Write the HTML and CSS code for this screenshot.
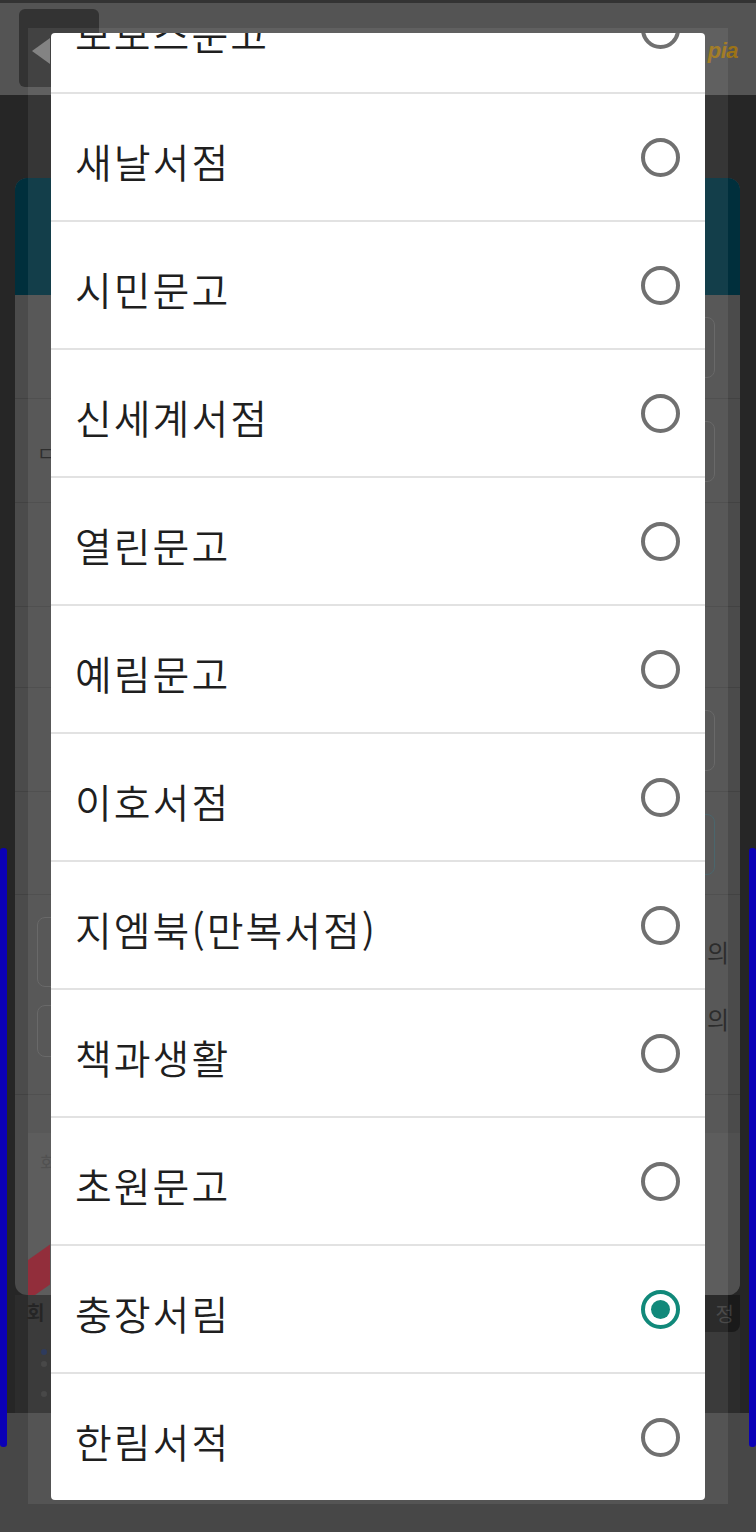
FILE: index.html
```html
<!DOCTYPE html>
<html lang="ko">
<head>
<meta charset="utf-8">
<title>서점 선택</title>
<link rel="stylesheet" href="styles.css">
</head>
<body>
<div class="page">
  <header class="topbar">
    <div class="back"><span class="arrow"></span></div>
    <div class="logo">pia</div>
  </header>
  <div class="gap"></div>
  <section class="card">
    <div class="card-head"></div>
    <div class="card-body">
      <div class="frow r1"><span class="field"></span></div>
      <div class="frow r2"><span class="label">ㄷ</span><span class="field"></span></div>
      <div class="frow r3"></div>
      <div class="frow r4"></div>
      <div class="frow r5"><span class="field"></span></div>
      <div class="frow r6"><span class="field sel"></span></div>
      <div class="frow r7">
        <div class="chk"><span class="cbox"></span><span class="agree">의</span></div>
        <div class="chk second"><span class="cbox small"></span><span class="agree">의</span></div>
      </div>
      <div class="frow r8">
        <div class="banner"><span class="btxt">회</span><span class="mark"></span></div>
      </div>
    </div>
  </section>
  <div class="footer">
    <div class="foot-left">
      <span class="ftitle">회</span>
      <span class="dot blue"></span>
      <span class="dot"></span>
      <span class="dot low"></span>
    </div>
    <div class="foot-btn">정</div>
  </div>
  <div class="bottom-band"></div>
</div>

<div class="edge edge-left"></div>
<div class="edge edge-right"></div>
<div class="scrim"></div>

<div class="dialog">
  <ul class="list">
    <li class="item"><span class="name">보보스문고</span><span class="radio"></span></li>
    <li class="item"><span class="name">새날서점</span><span class="radio"></span></li>
    <li class="item"><span class="name">시민문고</span><span class="radio"></span></li>
    <li class="item"><span class="name">신세계서점</span><span class="radio"></span></li>
    <li class="item"><span class="name">열린문고</span><span class="radio"></span></li>
    <li class="item"><span class="name">예림문고</span><span class="radio"></span></li>
    <li class="item"><span class="name">이호서점</span><span class="radio"></span></li>
    <li class="item"><span class="name">지엠북(만복서점)</span><span class="radio"></span></li>
    <li class="item"><span class="name">책과생활</span><span class="radio"></span></li>
    <li class="item"><span class="name">초원문고</span><span class="radio"></span></li>
    <li class="item"><span class="name">충장서림</span><span class="radio checked"></span></li>
    <li class="item"><span class="name">한림서적</span><span class="radio"></span></li>
  </ul>
</div>
</body>
</html>
```

FILE: styles.css
```css
html, body {
  margin: 0;
  padding: 0;
  width: 756px;
  height: 1532px;
  overflow: hidden;
}

body {
  position: relative;
  background: #262626;
  font-family: "Noto Sans CJK KR", "Noto Sans", sans-serif;
}

/* ---------- dimmed page underneath ---------- */
.page {
  display: flex;
  flex-direction: column;
}

.topbar {
  height: 92px;
  border-top: 3px solid #333333;
  background: #545454;
  display: flex;
  align-items: flex-start;
}

.back {
  width: 80px;
  height: 78px;
  margin: 6px 0 0 19px;
  background: #333333;
  border-radius: 6px;
  display: flex;
  align-items: center;
  padding-left: 13px;
  box-sizing: border-box;
}

.arrow {
  width: 0;
  height: 0;
  border-right: 18px solid #7a7a7a;
  border-top: 13px solid transparent;
  border-bottom: 13px solid transparent;
  margin-top: 6px;
}

.logo {
  margin-left: auto;
  margin-right: 18px;
  padding-top: 35px;
  font-family: "Liberation Sans", sans-serif;
  font-style: italic;
  font-weight: bold;
  font-size: 22px;
  color: #9c7316;
  letter-spacing: -0.5px;
}

.gap {
  height: 83px;
}

.card {
  margin: 0 16px 0 15px;
  border-radius: 12px;
  overflow: hidden;
  background: #4b4b4b;
}

.card-head {
  height: 117px;
  background: #002f3c;
}

.frow {
  box-sizing: border-box;
  border-bottom: 1px solid #424242;
  display: flex;
  align-items: flex-start;
  padding: 0 25px 0 22px;
}

.r1, .r2, .r3, .r5 { height: 104px; }
.r4 { height: 81px; }
.r6 { height: 103px; }
.r7 { height: 200px; flex-direction: column; align-items: stretch; padding-top: 22px; gap: 18px; }
.r8 { height: 200px; border-bottom: none; padding: 38px 0 0 13px; }

.field {
  margin: 22px 0 0 auto;
  width: 440px;
  height: 61px;
  box-sizing: border-box;
  border: 1px solid #5d5d5d;
  border-radius: 8px;
}

.field.sel {
  border-color: #3c5a62;
}

.label {
  margin-top: 44px;
  font-size: 19px;
  color: #1e1e1e;
  line-height: 20px;
}

.chk {
  display: flex;
  align-items: center;
}

.cbox {
  width: 120px;
  height: 70px;
  box-sizing: border-box;
  border: 1px solid #5d5d5d;
  border-radius: 8px;
}

.cbox.small {
  height: 52px;
}

.second {
  align-items: flex-start;
}

.agree {
  margin-left: auto;
  margin-right: -14px;
  font-size: 24px;
  color: #1c1c1c;
  line-height: 28px;
}

.banner {
  flex: 1;
  height: 162px;
  background: #505050;
  position: relative;
  overflow: hidden;
  padding: 16px 0 0 12px;
  box-sizing: border-box;
}

.btxt {
  font-size: 18px;
  color: #444444;
}

.mark {
  position: absolute;
  left: -8px;
  bottom: 0;
  width: 30px;
  height: 40px;
  background: #8a1e2c;
  transform: skewY(-35deg);
}

.footer {
  height: 118px;
  margin: 0 16px 0 15px;
  background: #2c2c2c;
  display: flex;
  justify-content: space-between;
  align-items: flex-start;
}

.foot-left {
  display: flex;
  flex-direction: column;
  padding: 6px 0 0 12px;
  gap: 6px;
}

.ftitle {
  font-size: 19px;
  font-weight: bold;
  color: #141414;
  line-height: 22px;
}

.dot {
  width: 6px;
  height: 6px;
  border-radius: 50%;
  background: #3a3a3a;
  margin-left: 14px;
}

.dot.blue { background: #1e2c50; margin-top: 20px; }
.dot.low { margin-top: 18px; }

.foot-btn {
  width: 60px;
  height: 37px;
  background: #1a1a1a;
  border-radius: 0 0 8px 8px;
  color: #3c3c3c;
  font-size: 20px;
  line-height: 37px;
  text-align: right;
  padding-right: 6px;
  box-sizing: border-box;
}

.bottom-band {
  height: 130px;
  background: #474747;
}

/* blue edge glows, above the dimmed page */
.edge {
  position: absolute;
  top: 848px;
  width: 7px;
  height: 599px;
  background: #0b00b6;
  border-radius: 3px;
}

.edge-left { left: 0; }
.edge-right { right: 0; }

/* lighter window behind the dialog */
.scrim {
  position: absolute;
  left: 28px;
  top: 28px;
  width: 700px;
  height: 1476px;
  background: rgba(255, 255, 255, 0.075);
}

/* ---------- the dialog ---------- */
.dialog {
  position: absolute;
  left: 51px;
  top: 33px;
  width: 654px;
  height: 1467px;
  background: #ffffff;
  border-radius: 4px;
  overflow: hidden;
}

.list {
  list-style: none;
  margin: -67px 0 0 0;
  padding: 0;
}

.item {
  height: 126px;
  border-bottom: 2px solid #e2e2e2;
  display: flex;
  align-items: center;
  justify-content: space-between;
  padding: 0 25px 0 24px;
}

.item:last-child {
  border-bottom: none;
}

.name {
  font-family: "Noto Sans CJK KR", "Noto Sans", sans-serif;
  font-size: 40px;
  font-weight: 350;
  letter-spacing: 2px;
  color: #1f1f1f;
  line-height: 1;
  padding-top: 8px;
}

.radio {
  width: 39px;
  height: 39px;
  box-sizing: border-box;
  border: 4px solid #707070;
  border-radius: 50%;
  display: flex;
  align-items: center;
  justify-content: center;
}

.radio.checked {
  border-color: #11897a;
}

.radio.checked::after {
  content: "";
  width: 19px;
  height: 19px;
  border-radius: 50%;
  background: #11897a;
}
```
